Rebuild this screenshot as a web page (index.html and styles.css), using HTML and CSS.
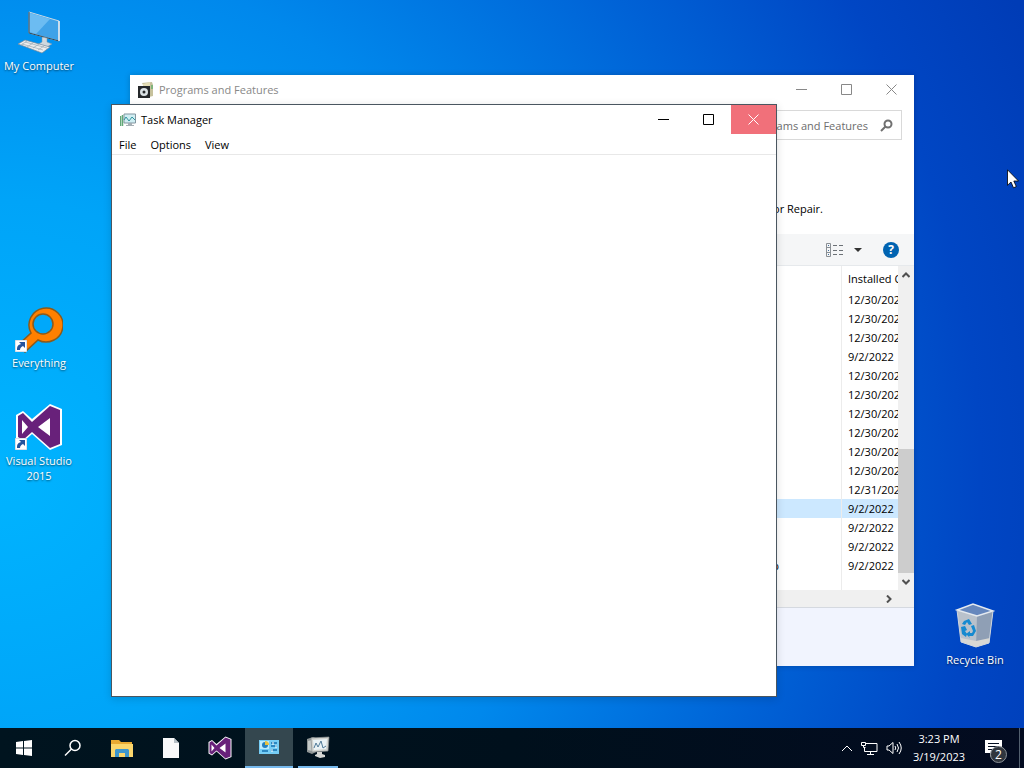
FILE: index.html
```html
<!DOCTYPE html>
<html lang="en">

<head>
    <meta charset="UTF-8">
    <meta name="viewport" content="width=device-width, initial-scale=1.0">
    <title>Desktop</title>
    <link rel="stylesheet" href="styles.css">
</head>

<body>
    <!-- shared icons -->
    <svg class="sprite" aria-hidden="true">
        <symbol id="vs" viewBox="0 0 48 48">
            <path d="M1 12l7-4 9 8L35 1l12 5v36l-12 5-18-16-9 8-7-4z" fill="#fff" />
            <path d="M3 13l5-3 9 9L35 3l10 4v34l-10 4-18-16-9 8-5-3z" fill="#68217a" />
            <path d="M7 17v14l6-7zM35 15v18L23 24z" fill="#fff" />
        </symbol>
        <symbol id="shortcut" viewBox="0 0 12 12">
            <path d="M0 0h12v12H0z" fill="#fff" stroke="#b8c4d4" />
            <path d="M4 2h6v6L8 6C6 7 5 8 5 10H2c0-4 1-5 4-6z" fill="#24539d" />
        </symbol>
    </svg>

    <main class="desktop">
        <a href="#" class="shortcut my-computer">
            <svg width="48" height="48" viewBox="0 0 48 48">
                <path d="M14 4l30 9v20l-30-8z" fill="#3fa2e8" stroke="#c8d8e4" stroke-width="1" />
                <path d="M14 4v21l30 8" fill="none" stroke="#2c4658" />
                <path d="M15 5l20 6-14 15-6-2z" fill="#6cbcf2" />
                <path d="M44 13v20" stroke="#e4eaf0" stroke-width="1.500" />
                <path d="M27 29l5 1v4l5 2-7 4-8-3 5-3z" fill="#cfd8df" stroke="#7f94a4" stroke-width=".5" />
                <path d="M3 36l7-4 25 7-8 6z" fill="#ecedee" stroke="#74879a" stroke-width=".7" />
                <path d="M7 36l21 6M10 34l22 6M12 33l-6 4M18 35l-6 4M24 36l-6 4M29 38l-6 4" stroke="#9ca9b3" fill="none" stroke-width=".7" />
            </svg>
            <span>My Computer</span>
        </a>
        <a href="#" class="shortcut everything">
            <svg width="48" height="48" viewBox="0 0 48 48">
                <path d="M3 40l13-12a17 17 0 1 1 7 7L10 47z" fill="#ff8000" stroke="#8a5a1c" stroke-width="1.5" />
                <circle cx="28" cy="19" r="10" fill="#00a8fa" stroke="#8a5a1c" stroke-width="1.5" />
                <use href="#shortcut" x="0" y="35" width="12" height="12" />
            </svg>
            <span>Everything</span>
        </a>
        <a href="#" class="shortcut visual-studio">
            <svg width="48" height="48" viewBox="0 0 48 48">
                <use href="#vs" width="48" height="48" />
                <use href="#shortcut" x="0" y="35" width="12" height="12" />
            </svg>
            <span>Visual Studio 2015</span>
        </a>
        <a href="#" class="shortcut recycle-bin">
            <svg width="48" height="48" viewBox="0 0 48 48">
                <path d="M6 8l16-6 20 7-4 32-13 4-15-5z" fill="#b9c1cb" />
                <path d="M26 13l16-4-4 32-13 4z" fill="#8f9fb5" />
                <path d="M6 8l16-6 20 7-16 5z" fill="#6687bd" stroke="#e4e9ef" stroke-width="1.5" />
                <path d="M10 36l15 3 14-3-1 5-13 4-15-5z" fill="#d8d8d4" />
                <path d="M6 8l4 32 15 5 13-4 4-32" fill="none" stroke="#cfd6de" stroke-width="1" />
                <path d="M13 19l5-2 3 5-3 1-2-3-2 3-3-1zM10 25l4-1 2 4-2 1 2 3-1 3-4-3zM20 24l3-1 2 6-3 5h-4l1 2-4-4 4-3v2h2l1-2z" fill="#168ad0" />
            </svg>
            <span>Recycle Bin</span>
        </a>

        <section class="window programs">
            <header class="titlebar">
                <svg width="16" height="16" viewBox="0 0 16 16">
                    <path d="M4 1l10-1 1 3v11l-4 1z" fill="#c6c19c" />
                    <path d="M5 2l7-2v5H5z" fill="#e4ddb6" />
                    <path d="M13 3h2v4h-2z" fill="#80b37b" />
                    <path d="M0 4h12v12H0z" fill="#25282b" />
                    <circle cx="6" cy="10" r="4" fill="#dce3e6" />
                    <circle cx="6" cy="10" r="1.5" fill="#25282b" />
                </svg>
                <h1>Programs and Features</h1>
                <button aria-label="Minimize"><svg width="11" height="11"><path d="M0 5.500h11" /></svg></button>
                <button aria-label="Maximize"><svg width="11" height="11"><path d="M.5.5h10v10H.5z" /></svg></button>
                <button aria-label="Close"><svg width="11" height="11"><path d="M.5.5l10 10M10.500.5l-10 10" /></svg></button>
            </header>
            <div class="address-row">
                <label class="search">
                    <input type="text" placeholder="Search Programs and Features" aria-label="Search Programs and Features">
                    <svg width="13" height="13" viewBox="0 0 13 13">
                        <circle cx="8" cy="5" r="3.500" />
                        <path d="M5.500 7.500L1 12" />
                    </svg>
                </label>
            </div>
            <p class="hint">Uninstall, Change, or Repair.</p>
            <div class="toolbar">
                <button aria-label="View">
                    <svg width="17" height="14" viewBox="0 0 17 14" fill="none" stroke="#8a8f94">
                        <path d="M.5.5h4v13h-4zM.5 4.500h4M.5 9.500h4" />
                        <path d="M2 2.500h1M2 7.500h1M2 11.500h1" stroke="#3f6f9f" />
                        <path d="M7 2.500h4M13 2.500h4M7 7.500h4M13 7.500h4M7 11.500h4M13 11.500h4" stroke="#6c7176" />
                    </svg>
                </button>
                <button aria-label="More views">
                    <svg width="8" height="4"><path d="M0 0h8L4 4z" fill="#333" /></svg>
                </button>
                <button class="help" aria-label="Help">?</button>
            </div>
            <div class="list-area">
                <table>
                    <thead>
                        <tr><th></th><th>Installed On</th></tr>
                    </thead>
                    <tbody>
                        <tr><td></td><td>12/30/2022</td></tr>
                        <tr><td></td><td>12/30/2022</td></tr>
                        <tr><td></td><td>12/30/2022</td></tr>
                        <tr><td></td><td>9/2/2022</td></tr>
                        <tr><td></td><td>12/30/2022</td></tr>
                        <tr><td></td><td>12/30/2022</td></tr>
                        <tr><td></td><td>12/30/2022</td></tr>
                        <tr><td></td><td>12/30/2022</td></tr>
                        <tr><td></td><td>12/30/2022</td></tr>
                        <tr><td></td><td>12/30/2022</td></tr>
                        <tr><td></td><td>12/31/2022</td></tr>
                        <tr class="selected"><td></td><td>9/2/2022</td></tr>
                        <tr><td></td><td>9/2/2022</td></tr>
                        <tr><td></td><td>9/2/2022</td></tr>
                        <tr><td>Microsoft Corp</td><td>9/2/2022</td></tr>
                        <tr class="filler"><td></td><td></td></tr>
                    </tbody>
                </table>
                <div class="scroll-y">
                    <button aria-label="Scroll up"><svg width="8" height="6"><path d="M.5 5L4 1.500 7.500 5" /></svg></button>
                    <div class="track"></div>
                    <div class="thumb"></div>
                    <button aria-label="Scroll down"><svg width="8" height="6"><path d="M.5 1L4 4.500 7.500 1" /></svg></button>
                </div>
            </div>
            <div class="scroll-x">
                <button aria-label="Scroll right"><svg width="6" height="8"><path d="M1 .5L4.500 4 1 7.500" /></svg></button>
            </div>
            <footer class="details"></footer>
        </section>

        <section class="window task-manager">
            <header class="titlebar">
                <svg width="16" height="16" viewBox="0 0 16 16">
                    <path d="M.5 4v10M2.500 3v11" stroke="#62a878" stroke-width="1.500" />
                    <path d="M4 2h11.500v9H4z" fill="#cfeef3" stroke="#8195a0" />
                    <path d="M4 8l2-3 3 4 3-4 3 3" fill="none" stroke="#31949f" />
                    <path d="M8 11h4v2h2v1H6v-1h2z" fill="#a5afb5" />
                </svg>
                <h1>Task Manager</h1>
                <button aria-label="Minimize"><svg width="11" height="11"><path d="M0 5.500h11" /></svg></button>
                <button aria-label="Maximize"><svg width="11" height="11"><path d="M.5.5h10v10H.5z" /></svg></button>
                <button class="close" aria-label="Close"><svg width="11" height="11"><path d="M.5.5l10 10M10.500.5l-10 10" /></svg></button>
            </header>
            <nav class="menu">
                <button>File</button>
                <button>Options</button>
                <button>View</button>
            </nav>
        </section>

        <svg class="cursor" width="13" height="20" viewBox="0 0 13 20">
            <path d="M.5.8v15.500l3.500-3.300 2.500 5.800 2.800-1.200-2.500-5.600h4.700z" fill="#fff" stroke="#000" stroke-width=".8" />
        </svg>
    </main>

    <footer class="taskbar">
        <button aria-label="Start">
            <svg width="16" height="16" viewBox="0 0 16 16" fill="#fff">
                <path d="M0 2l7-1v6.500H0zM8 1l8-1v7.500H8zM0 8.500h7V15l-7-1zM8 8.500h8V16l-8-1z" />
            </svg>
        </button>
        <button aria-label="Search">
            <svg width="18" height="18" viewBox="0 0 18 18" fill="none" stroke="#fff" stroke-width="1.500">
                <circle cx="11" cy="6.500" r="5" />
                <path d="M7.500 10L1 16.500" />
            </svg>
        </button>
        <button aria-label="File Explorer">
            <svg width="22" height="19" viewBox="0 0 22 19">
                <path d="M0 1h8l2 2h11v15H0z" fill="#e9aa33" />
                <path d="M0 5h22v13H0z" fill="#fbd66c" />
                <path d="M4 18v-7l1-1h12l1 1v7h-4v-4H8v4z" fill="#3e96cc" />
            </svg>
        </button>
        <button aria-label="Document">
            <svg width="16" height="20" viewBox="0 0 16 20">
                <path d="M0 0h11l5 5v15H0z" fill="#f8f9fa" />
                <path d="M11 0v5h5z" fill="#b6c0c7" />
            </svg>
        </button>
        <button aria-label="Visual Studio"><svg width="24" height="24"><use href="#vs" width="24" height="24" /></svg></button>
        <button class="active" aria-label="Programs and Features">
            <svg width="20" height="14" viewBox="0 0 20 14">
                <path d="M0 0h20v14H0z" fill="#76cdf5" />
                <path d="M1 1h9v8H1z" fill="#bdebff" />
                <circle cx="6" cy="5" r="3" fill="#2580bf" />
                <path d="M6 5V1a4 4 0 0 1 4 4z" fill="#e8c03e" />
                <path d="M12 3h6M12 6h6M12 10h6M3 11h6" stroke="#1570b0" stroke-width="1.500" />
                <path d="M14 2v3M17 5v3M13 9v3" stroke="#fff" />
            </svg>
        </button>
        <button class="open" aria-label="Task Manager">
            <svg width="24" height="22" viewBox="0 0 24 22">
                <path d="M1 3l6-2 3 1v14l-4 2-5-2z" fill="#8f9595" />
                <path d="M2 5l4-1v11l-4-1z" fill="#c3c9c8" />
                <path d="M5 2l18-1-1 14-16 1z" fill="#d2d4d0" stroke="#8a8f90" stroke-width=".7" />
                <path d="M7 4l14-1-1 10-12 1z" fill="#e9f2f5" />
                <path d="M8 12l2-5 2 4 3-6 2 7 3-2" fill="none" stroke="#507a98" />
                <path d="M11 16h5v2l3 1v2l-5 1-5-2v-1l2-1z" fill="#d6d7d4" />
            </svg>
        </button>
        <div class="tray">
            <button aria-label="Show hidden icons">
                <svg width="12" height="7" viewBox="0 0 12 7"><path d="M1 6l5-5 5 5" /></svg>
            </button>
            <button aria-label="Network">
                <svg width="17" height="15" viewBox="0 0 17 15">
                    <path d="M5 2.500h11v8H3.500V6M9.500 10.500v3M6 13.500h7M.5 1.500h4v3h-4zM2.500 4.500v2h2" />
                </svg>
            </button>
            <button aria-label="Volume">
                <svg width="16" height="14" viewBox="0 0 16 14">
                    <path d="M1 5h2l4-3.500v11L3 9H1zM9 5q1.500 2 0 4M11 3q3 4 0 8M13 1q4.500 6 0 12" />
                </svg>
            </button>
        </div>
        <time class="clock">3:23 PM<br>3/19/2023</time>
        <button class="notifications" aria-label="2 new notifications">
            <svg width="17" height="17" viewBox="0 0 17 17">
                <path d="M0 0h17v13h-9l-3 4v-4H0z" fill="#fff" />
                <path d="M3 3.500h11M3 6.500h11M3 9.500h7" stroke="#041022" />
            </svg>
            <span class="badge">2</span>
        </button>
        <button class="show-desktop" aria-label="Show desktop"></button>
    </footer>
</body>

</html>
```

FILE: styles.css
```css
* {
    box-sizing: border-box;
}

body {
    display: flex;
    flex-direction: column;
    height: 100vh;
    margin: 0;
    overflow: hidden;
    font-family: "Open Sans", "Noto Sans", sans-serif;
    font-size: 11px;
    line-height: 15px;
    color: #000;
}

button {
    display: flex;
    align-items: center;
    justify-content: center;
    padding: 0;
    border: none;
    background: none;
    font: inherit;
    color: inherit;
}

.sprite {
    position: absolute;
    width: 0;
    height: 0;
}

.desktop {
    position: relative;
    flex: 1;
    background: radial-gradient(ellipse 110% 150% at 0% 65%, #00b4ff 0%, #00a4f8 25%, #0088ec 48%, #0062d6 70%, #0046c4 87%, #003cb6 100%);
}

/* desktop shortcuts */
.shortcut {
    position: absolute;
    display: flex;
    flex-direction: column;
    align-items: center;
    gap: 2px;
    width: 78px;
    color: #fff;
    text-align: center;
    text-decoration: none;
    text-shadow: 0 1px 2px rgba(0, 0, 0, 0.6);
}

.my-computer {
    left: 0;
    top: 8px;
}

.everything {
    left: 0;
    top: 305px;
}

.visual-studio {
    left: 0;
    top: 403px;
}

.recycle-bin {
    right: 10px;
    top: 602px;
}

/* windows */
.window {
    position: absolute;
    display: flex;
    flex-direction: column;
    background: #fff;
}

.programs {
    inset: 75px 110px 62px 130px;
    box-shadow: 0 0 6px rgba(0, 0, 0, 0.2);
}

.task-manager {
    inset: 104px 247px 31px 111px;
    border: 1px solid #4a5660;
    box-shadow: 0 2px 8px rgba(0, 0, 0, 0.15);
}

.titlebar {
    display: flex;
    align-items: center;
    height: 29px;
    padding-left: 8px;
    stroke: #000;
}

.titlebar > svg {
    stroke: none;
}

.titlebar h1 {
    flex: 1;
    margin: 0 0 0 5px;
    font-size: 11px;
    font-weight: 400;
}

.titlebar button {
    width: 45px;
    height: 29px;
}

.titlebar button svg {
    fill: none;
}

.titlebar .close {
    background: #f1707a;
    stroke: #fff;
}

.programs .titlebar {
    stroke: #888;
    color: #888;
}

.menu {
    display: flex;
    gap: 14px;
    height: 21px;
    padding-left: 7px;
    border-bottom: 1px solid #e8e8e8;
}

.address-row {
    display: flex;
    justify-content: flex-end;
    padding: 6px 12px;
}

.search {
    display: flex;
    align-items: center;
    gap: 12px;
    width: 220px;
    height: 30px;
    padding-right: 8px;
    border: 1px solid #d9d9d9;
}

.search input {
    flex: 1;
    min-width: 0;
    padding: 0;
    border: none;
    outline: none;
    font: inherit;
    text-align: right;
}

.search input::placeholder {
    color: #6d6d6d;
}

.search svg {
    fill: none;
    stroke: #707070;
    stroke-width: 2;
}

.hint {
    margin: 55px 91px 18px;
    text-align: right;
}

.toolbar {
    display: flex;
    align-items: center;
    justify-content: flex-end;
    height: 32px;
    padding-right: 15px;
    gap: 11px;
    background: #f5f6f7;
    border-bottom: 1px solid #e6e9ec;
}

.help {
    width: 16px;
    height: 16px;
    margin-left: 10px;
    border-radius: 50%;
    background: #0063b1;
    color: #fff;
    font-size: 12px;
    font-weight: 700;
}

.list-area {
    display: flex;
    flex: 1;
    min-height: 0;
}

table {
    flex: 1;
    width: 100%;
    min-width: 0;
    table-layout: fixed;
    border-collapse: separate;
    border-spacing: 0;
}

th,
td {
    height: 19px;
    padding: 0;
    overflow: hidden;
    font-weight: 400;
    white-space: nowrap;
}

th {
    height: 24px;
}

td:first-child {
    padding-right: 62px;
    text-align: right;
}

th:last-child,
td:last-child {
    width: 57px;
    padding-left: 6px;
    border-left: 1px solid #ececec;
    text-align: left;
}

.selected td {
    background: #cce8ff;
}

.filler td {
    height: auto;
}

.scroll-y {
    display: flex;
    flex-direction: column;
    flex: none;
    width: 16px;
    background: #f0f0f0;
}

.scroll-y button,
.scroll-x button {
    width: 16px;
    height: 17px;
    fill: none;
    stroke: #505050;
    stroke-width: 2;
}

.track {
    flex: 166;
}

.thumb {
    flex: 124;
    background: #cdcdcd;
}

.scroll-x {
    display: flex;
    justify-content: flex-end;
    height: 18px;
    padding-right: 17px;
    background: #f0f0f0;
    border-bottom: 1px solid #d5d9e0;
}

.details {
    height: 58px;
    background: #f1f4fe;
}

.cursor {
    position: absolute;
    right: 4px;
    top: 169px;
}

/* taskbar */
.taskbar {
    display: flex;
    gap: 1px;
    height: 40px;
    background: linear-gradient(to right, #00141f, #00101c 50%, #030b20);
    color: #fff;
}

.taskbar > button {
    width: 48px;
}

.taskbar .active {
    background: #34474f;
    border-bottom: 2px solid #76b9ed;
}

.taskbar .open {
    width: 40px;
    margin-left: 4px;
    border-bottom: 2px solid #76b9ed;
}

.tray {
    display: flex;
    gap: 8px;
    margin-left: auto;
    fill: none;
    stroke: #fff;
}

.clock {
    width: 56px;
    margin-left: 8px;
    padding-top: 2px;
    line-height: 18px;
    text-align: center;
    white-space: nowrap;
}

.taskbar .notifications {
    position: relative;
    width: 50px;
}

.badge {
    position: absolute;
    right: 11px;
    bottom: 5px;
    width: 17px;
    height: 17px;
    border: 1px solid #8c9298;
    border-radius: 50%;
    background: #30363e;
    font-size: 12px;
}

.taskbar .show-desktop {
    width: 5px;
    border-left: 1px solid #53606f;
}
```
